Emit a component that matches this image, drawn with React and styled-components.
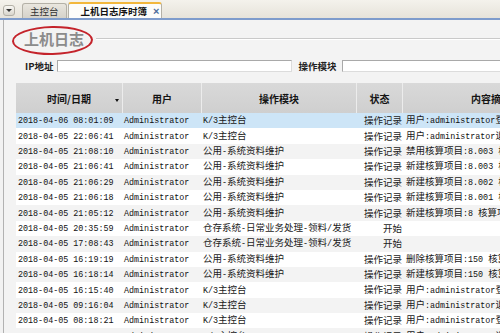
import React from "react";
import styled, { createGlobalStyle } from "styled-components";

const Global = createGlobalStyle`
  html, body { margin: 0; padding: 0; }
  body {
    width: 500px; height: 333px; overflow: hidden; background: #f2f2f2;
    font-family: "Noto Sans CJK SC", "Liberation Sans", sans-serif;
  }
  #root { width: 500px; height: 333px; }
`;

const Screen = styled.div`
  width: 500px; height: 333px; display: flex; flex-direction: column; overflow: hidden;
`;

const TabBar = styled.div`
  height: 18px; flex: none; display: flex; align-items: flex-end;
  background: linear-gradient(#f4f2ec, #e6e3da);
  border-bottom: 2px solid #7e9ccc;
  padding-left: 3px;
`;

const DropBtn = styled.div`
  width: 10px; height: 9px; margin: 0 7px 2px 0;
  border: 1px solid #b3b0a6; border-radius: 3px;
  background: linear-gradient(#f8f7f3, #d9d6cd);
  display: flex; align-items: center; justify-content: center;
  &::after {
    content: ""; border-left: 3px solid transparent; border-right: 3px solid transparent;
    border-top: 3px solid #333;
  }
`;

const Tab = styled.div`
  height: ${(p) => (p.$active ? "16px" : "15px")};
  box-sizing: border-box; padding: ${(p) => (p.$active ? "0 2px 0 12px" : "0 7px")};
  margin-right: 1px;
  display: flex; align-items: center; gap: 6px;
  border: 1px solid #b4b1a7; border-bottom: none; border-radius: 3px 3px 0 0;
  border-top: ${(p) => (p.$active ? "2px solid #f2b73c" : "1px solid #b4b1a7")};
  background: ${(p) => (p.$active ? "#fcfcfa" : "linear-gradient(#e9e6de, #d5d2c9)")};
  font-size: 9.5px; font-weight: ${(p) => (p.$active ? 700 : 400)};
  color: ${(p) => (p.$active ? "#111" : "#333")}; white-space: nowrap;
`;

const Close = styled.span`
  font-family: "Liberation Sans", sans-serif; font-size: 11px; font-weight: 700; color: #4d6d9c;
`;

const Frame = styled.div`
  flex: 1; margin-left: 3px; border-left: 1px solid #b2b2b2; background: #f3f3f3;
  display: flex; flex-direction: column; min-height: 0;
`;

const GroupHead = styled.div`
  height: 30px; margin-top: 4px; display: flex; align-items: center; padding-left: 20px;
`;

const Title = styled.span`
  position: relative; font-size: 15px; line-height: 20px; font-weight: 700; color: #8b8b8b;
  &::after {
    content: ""; position: absolute; left: -12px; right: -9px; top: -3px; bottom: -6px;
    border: 2px solid #c4232b; border-radius: 50%; transform: rotate(-1deg);
  }
`;

const GroupLine = styled.div`
  flex: 1; height: 1px; background: #c9c9c9; border-bottom: 1px solid #fff; margin-left: 12px;
`;

const FilterRow = styled.div`
  display: flex; align-items: center; height: 12px; margin-top: 6px; padding-left: 21px;
`;

const Label = styled.span`
  font-size: 9.5px; font-weight: 700; color: #222; margin-right: ${(p) => p.$gap || 4}px;
  margin-left: ${(p) => p.$left || 0}px; white-space: nowrap;
`;

const Input = styled.div`
  width: ${(p) => p.$w}px; flex: none; height: 10px; background: #fff;
  border: 1px solid #a9a9a9; border-right-color: #dcdcdc; border-bottom-color: #dcdcdc;
`;

const Table = styled.div`
  margin: 11px 0 0 12px; overflow: hidden; flex: 1; min-height: 0; background: #f3f3f3;
`;

const cols = "107px 79px 155px 46px 177px";

const HeadRow = styled.div`
  display: grid; grid-template-columns: ${cols}; height: 30px;
  background: linear-gradient(#d9d9d9, #cfcfcf); width: 564px;
`;

const HeadCell = styled.div`
  position: relative; display: flex; align-items: center; justify-content: center;
  border-right: 1px solid #ececec; font-size: 10px; font-weight: 700; color: #141414;
  white-space: nowrap; overflow: hidden;
`;

const SortArrow = styled.span`
  position: absolute; right: 3px; top: 16px;
  border-left: 2.5px solid transparent; border-right: 2.5px solid transparent;
  border-top: 3px solid #111;
`;

const Row = styled.div`
  display: grid; grid-template-columns: ${cols}; height: 15.4px; width: 564px;
  align-items: center; font-size: 9.5px; color: #1a1a1a; white-space: nowrap;
  background: ${(p) => (p.$sel ? "#cde5f7" : p.$alt ? "#f3f3f3" : "#ffffff")};
`;

const Cell = styled.div`
  overflow: hidden; line-height: 15px;
  padding: ${(p) => (p.$right ? "0 1px 0 0" : "0 0 0 " + (p.$pad ?? 1) + "px")};
  text-align: ${(p) => (p.$right ? "right" : "left")};
`;

const Latin = styled.span`
  font-family: "Liberation Mono", "DejaVu Sans Mono", monospace; font-size: 8.4px; color: #111;
`;

const mixed = (s) =>
  s
    .split(/([\x00-\x7f]+)/)
    .filter(Boolean)
    .map((t, i) => (/^[\x00-\x7f]+$/.test(t) ? <Latin key={i}>{t}</Latin> : <span key={i}>{t}</span>));

const K3 = "K/3主控台";
const PUB = "公用-系统资料维护";
const STOCK = "仓存系统-日常业务处理-领料/发货";
const REC = "操作记录";

const rows = [
  ["2018-04-06 08:01:09", K3, REC, "用户:administrator登录系统"],
  ["2018-04-05 22:06:41", K3, REC, "用户:administrator退出系统"],
  ["2018-04-05 21:08:10", PUB, REC, "禁用核算项目:8.003 核算项目"],
  ["2018-04-05 21:06:41", PUB, REC, "新建核算项目:8.003 核算项目"],
  ["2018-04-05 21:06:29", PUB, REC, "新建核算项目:8.002 核算项目"],
  ["2018-04-05 21:06:18", PUB, REC, "新建核算项目:8.001 核算项目"],
  ["2018-04-05 21:05:12", PUB, REC, "新建核算项目:8 核算项目"],
  ["2018-04-05 20:35:59", STOCK, "开始", ""],
  ["2018-04-05 17:08:43", STOCK, "开始", ""],
  ["2018-04-05 16:19:19", PUB, REC, "删除核算项目:150 核算项目"],
  ["2018-04-05 16:18:14", PUB, REC, "新建核算项目:150 核算项目"],
  ["2018-04-05 16:15:40", K3, REC, "用户:administrator登录系统"],
  ["2018-04-05 09:16:04", K3, REC, "用户:administrator退出系统"],
  ["2018-04-05 08:18:21", K3, REC, "用户:administrator登录系统"],
  ["2018-04-05 07:58:02", K3, REC, "用户:administrator退出系统"],
];

export default function App() {
  return (
    <Screen>
      <Global />
      <TabBar>
        <DropBtn />
        <Tab>主控台</Tab>
        <Tab $active>
          上机日志序时簿<Close>×</Close>
        </Tab>
      </TabBar>
      <Frame>
        <GroupHead>
          <Title>上机日志</Title>
          <GroupLine />
        </GroupHead>
        <FilterRow>
          <Label>IP地址</Label>
          <Input $w={233} />
          <Label $left={6} $gap={5}>操作模块</Label>
          <Input $w={170} />
        </FilterRow>
        <Table>
          <HeadRow>
            <HeadCell>
              时间/日期
              <SortArrow />
            </HeadCell>
            <HeadCell>用户</HeadCell>
            <HeadCell>操作模块</HeadCell>
            <HeadCell>状态</HeadCell>
            <HeadCell>内容摘要</HeadCell>
          </HeadRow>
          {rows.map((r, i) => (
            <Row key={i} $sel={i === 0} $alt={i % 2 === 0}>
              <Cell $pad={2}>
                <Latin>{r[0]}</Latin>
              </Cell>
              <Cell>
                <Latin>Administrator</Latin>
              </Cell>
              <Cell>{mixed(r[1])}</Cell>
              <Cell $right>{r[2]}</Cell>
              <Cell $pad={3}>{mixed(r[3])}</Cell>
            </Row>
          ))}
        </Table>
      </Frame>
    </Screen>
  );
}
